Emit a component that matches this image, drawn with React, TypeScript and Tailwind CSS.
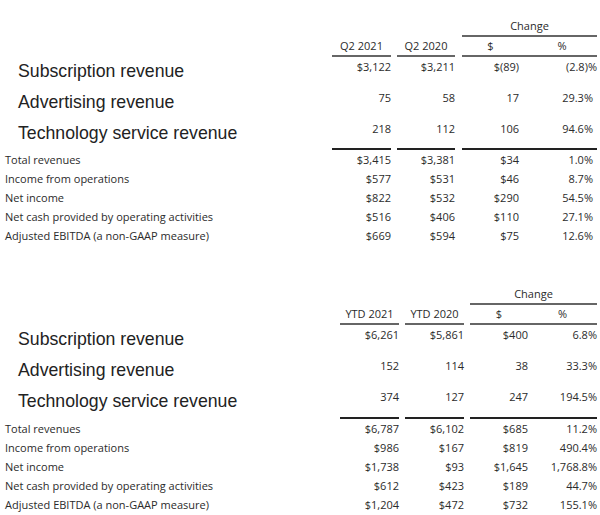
import React from 'react'

type Row = { label: string; a: string; b: string; d: string; p: string; neg?: boolean }

const sans = { fontFamily: '"Open Sans", "Noto Sans", sans-serif' }
const arial = { fontFamily: '"Liberation Sans", Arial, sans-serif' }

function Q2() {
  const big: Row[] = [
    { label: 'Subscription revenue', a: '$3,122', b: '$3,211', d: '$(89)', p: '(2.8)%', neg: true },
    { label: 'Advertising revenue', a: '75', b: '58', d: '17', p: '29.3%' },
    { label: 'Technology service revenue', a: '218', b: '112', d: '106', p: '94.6%' },
  ]
  const totals: Row[] = [
    { label: 'Total revenues', a: '$3,415', b: '$3,381', d: '$34', p: '1.0%' },
    { label: 'Income from operations', a: '$577', b: '$531', d: '$46', p: '8.7%' },
    { label: 'Net income', a: '$822', b: '$532', d: '$290', p: '54.5%' },
    { label: 'Net cash provided by operating activities', a: '$516', b: '$406', d: '$110', p: '27.1%' },
    { label: 'Adjusted EBITDA (a non-GAAP measure)', a: '$669', b: '$594', d: '$75', p: '12.6%' },
  ]
  return (
    <div className="text-[11px] text-[#2b2b2b]" style={sans}>
      {/* Change header */}
      <div className="flex h-[18px] leading-[18px]">
        <div className="flex-1" />
        <div className="w-[59px]" />
        <div className="w-[58px] ml-[6px]" />
        <div className="w-[135px] ml-[7px] text-center">Change</div>
        <div className="w-[3px]" />
      </div>
      <div className="flex h-[2px]">
        <div className="flex-1" />
        <div className="w-[59px]" />
        <div className="w-[58px] ml-[6px]" />
        <div className="w-[135px] ml-[7px] bg-[#666]" />
        <div className="w-[3px]" />
      </div>
      <div className="flex h-[18px] leading-[18px]">
        <div className="flex-1" />
        <div className="w-[59px] text-center">Q2 2021</div>
        <div className="w-[58px] ml-[6px] text-center">Q2 2020</div>
        <div className="w-[57px] ml-[7px] text-center">$</div>
        <div className="w-[78px] text-center pl-[8px]">%</div>
        <div className="w-[3px]" />
      </div>
      <div className="flex h-[2px]">
        <div className="flex-1" />
        <div className="w-[59px] bg-[#666]" />
        <div className="w-[58px] ml-[6px] bg-[#666]" />
        <div className="w-[135px] ml-[7px] bg-[#666]" />
        <div className="w-[3px]" />
      </div>
      {big.map((r, i) => (
        <div key={r.label} className={i === 2 ? 'flex h-[29px]' : 'flex h-[31px]'}>
          <div className="flex-1 pl-[18px] pt-[3px] text-[17.7px] leading-[22px] text-[#222]" style={arial}>
            {r.label}
          </div>
          <div className="w-[59px] text-right pt-[1px] leading-[17px]">{r.a}</div>
          <div className="w-[58px] ml-[6px] text-right pt-[1px] leading-[17px]">{r.b}</div>
          <div className="w-[57px] ml-[7px] text-right pt-[1px] leading-[17px]">{r.d}</div>
          <div className="w-[78px] text-right pt-[1px] leading-[17px] pr-[4px]">
            {/* closing paren hangs past the column edge */}
            {r.neg ? <span className="mr-[-4px]">{r.p}</span> : r.p}
          </div>
          <div className="w-[3px]" />
        </div>
      ))}
      <div className="flex h-[2px]">
        <div className="flex-1" />
        <div className="w-[59px] bg-[#222]" />
        <div className="w-[58px] ml-[6px] bg-[#222]" />
        <div className="w-[135px] ml-[7px] bg-[#222]" />
        <div className="w-[3px]" />
      </div>
      {totals.map(r => (
        <div key={r.label} className="flex h-[19px] leading-[19px]">
          <div className="flex-1 pl-[5px]">{r.label}</div>
          <div className="w-[59px] text-right">{r.a}</div>
          <div className="w-[58px] ml-[6px] text-right">{r.b}</div>
          <div className="w-[57px] ml-[7px] text-right">{r.d}</div>
          <div className="w-[78px] text-right pr-[4px]">{r.p}</div>
          <div className="w-[3px]" />
        </div>
      ))}
    </div>
  )
}

function YTD() {
  const big: Row[] = [
    { label: 'Subscription revenue', a: '$6,261', b: '$5,861', d: '$400', p: '6.8%' },
    { label: 'Advertising revenue', a: '152', b: '114', d: '38', p: '33.3%' },
    { label: 'Technology service revenue', a: '374', b: '127', d: '247', p: '194.5%' },
  ]
  const totals: Row[] = [
    { label: 'Total revenues', a: '$6,787', b: '$6,102', d: '$685', p: '11.2%' },
    { label: 'Income from operations', a: '$986', b: '$167', d: '$819', p: '490.4%' },
    { label: 'Net income', a: '$1,738', b: '$93', d: '$1,645', p: '1,768.8%' },
    { label: 'Net cash provided by operating activities', a: '$612', b: '$423', d: '$189', p: '44.7%' },
    { label: 'Adjusted EBITDA (a non-GAAP measure)', a: '$1,204', b: '$472', d: '$732', p: '155.1%' },
  ]
  return (
    <div className="text-[11px] text-[#2b2b2b]" style={sans}>
      <div className="flex h-[18px] leading-[18px]">
        <div className="flex-1" />
        <div className="w-[59px]" />
        <div className="w-[59px] ml-[6px]" />
        <div className="w-[127px] ml-[6px] text-center">Change</div>
        <div className="w-[3px]" />
      </div>
      <div className="flex h-[2px]">
        <div className="flex-1" />
        <div className="w-[59px]" />
        <div className="w-[59px] ml-[6px]" />
        <div className="w-[127px] ml-[6px] bg-[#666]" />
        <div className="w-[3px]" />
      </div>
      <div className="flex h-[18px] leading-[18px]">
        <div className="flex-1" />
        <div className="w-[59px] text-center">YTD 2021</div>
        <div className="w-[59px] ml-[6px] text-center">YTD 2020</div>
        <div className="w-[58px] ml-[6px] text-center">$</div>
        <div className="w-[69px] text-center">%</div>
        <div className="w-[3px]" />
      </div>
      <div className="flex h-[2px]">
        <div className="flex-1" />
        <div className="w-[59px] bg-[#666]" />
        <div className="w-[59px] ml-[6px] bg-[#666]" />
        <div className="w-[127px] ml-[6px] bg-[#666]" />
        <div className="w-[3px]" />
      </div>
      {big.map((r, i) => (
        <div key={r.label} className={i === 2 ? 'flex h-[30px]' : 'flex h-[31px]'}>
          <div className="flex-1 pl-[18px] pt-[3px] text-[17.7px] leading-[22px] text-[#222]" style={arial}>
            {r.label}
          </div>
          <div className="w-[59px] text-right pt-[1px] leading-[17px]">{r.a}</div>
          <div className="w-[59px] ml-[6px] text-right pt-[1px] leading-[17px]">{r.b}</div>
          <div className="w-[58px] ml-[6px] text-right pt-[1px] leading-[17px]">{r.d}</div>
          <div className="w-[69px] text-right pt-[1px] leading-[17px]">{r.p}</div>
          <div className="w-[3px]" />
        </div>
      ))}
      <div className="flex h-[2px]">
        <div className="flex-1" />
        <div className="w-[59px] bg-[#222]" />
        <div className="w-[59px] ml-[6px] bg-[#222]" />
        <div className="w-[127px] ml-[6px] bg-[#222]" />
        <div className="w-[3px]" />
      </div>
      {totals.map(r => (
        <div key={r.label} className="flex h-[19px] leading-[19px]">
          <div className="flex-1 pl-[5px]">{r.label}</div>
          <div className="w-[59px] text-right">{r.a}</div>
          <div className="w-[59px] ml-[6px] text-right">{r.b}</div>
          <div className="w-[58px] ml-[6px] text-right">{r.d}</div>
          <div className="w-[69px] text-right">{r.p}</div>
          <div className="w-[3px]" />
        </div>
      ))}
    </div>
  )
}

export default function App() {
  return (
    <div className="w-[600px] h-[515px] bg-white overflow-hidden">
      <div className="pt-[17px]">
        <Q2 />
      </div>
      <div className="pt-[40px]">
        <YTD />
      </div>
    </div>
  )
}
